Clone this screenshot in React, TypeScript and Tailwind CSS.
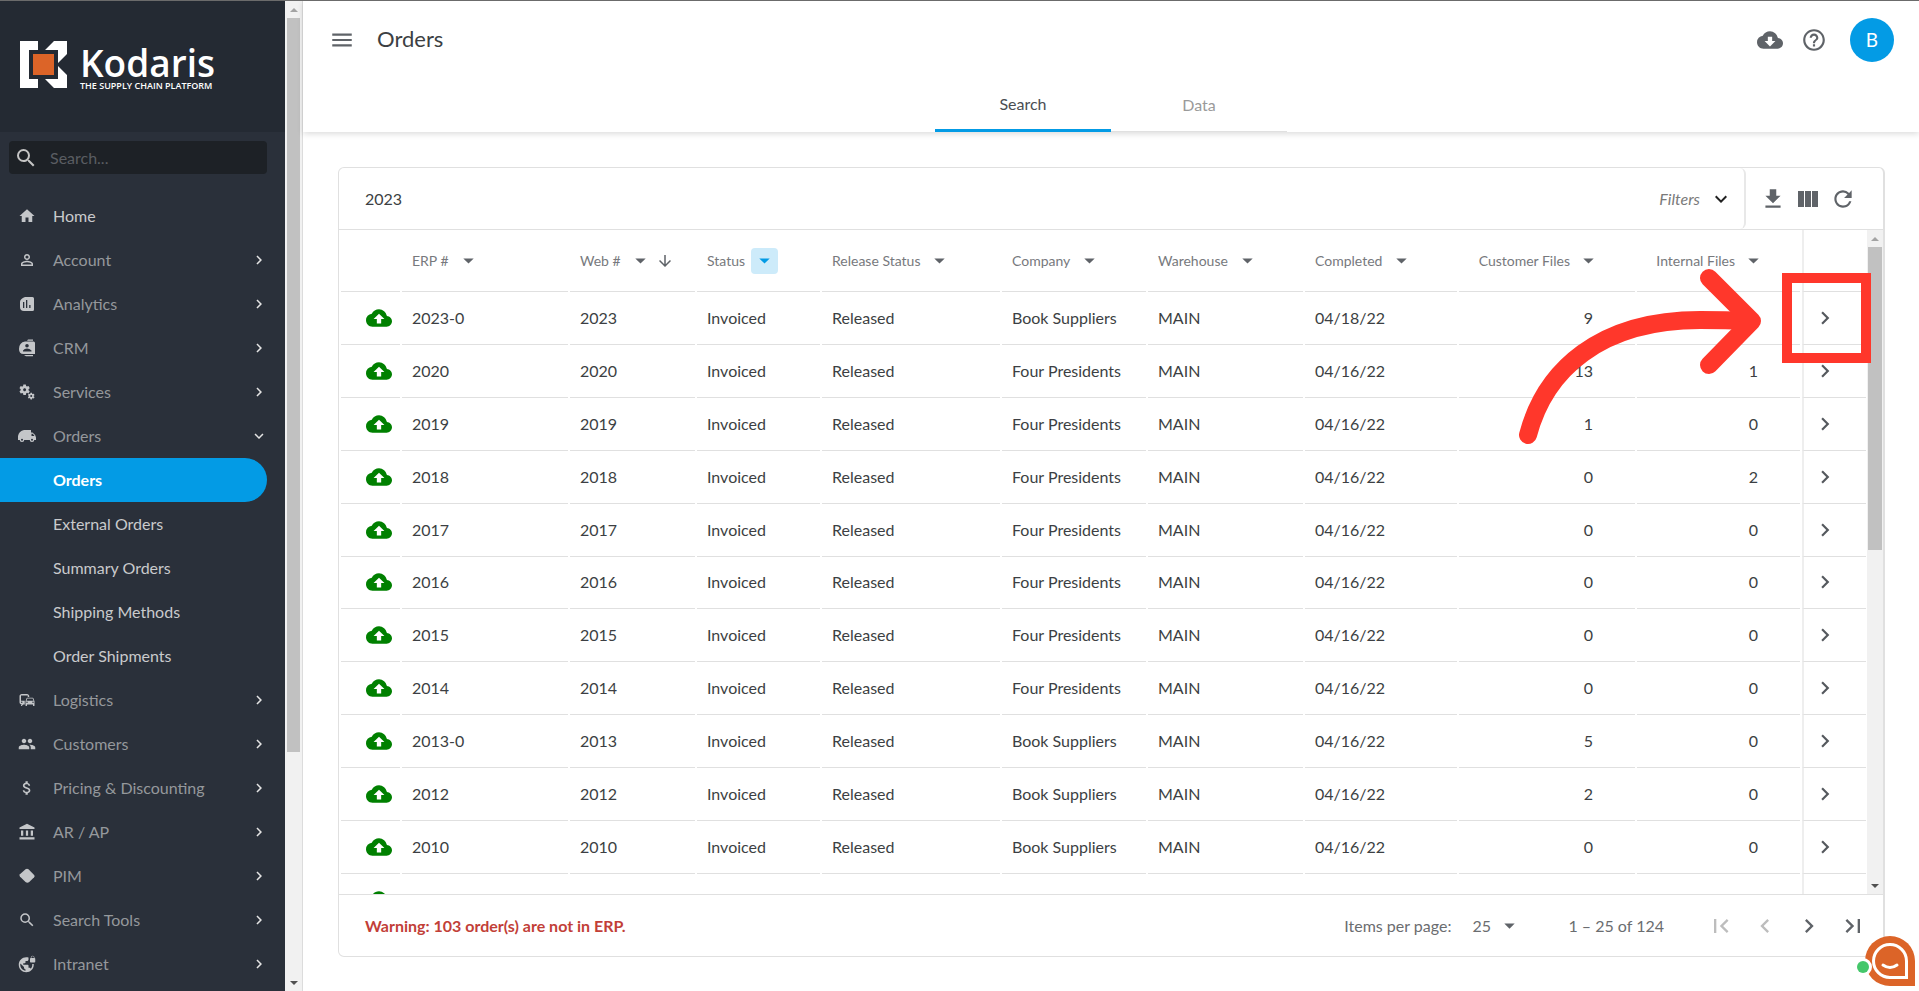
import React from 'react';
import {
  MdAccountBalance,
  MdArrowDownward,
  MdArrowDropDown,
  MdAttachMoney,
  MdBackup,
  MdChevronLeft,
  MdChevronRight,
  MdCloudDownload,
  MdCommute,
  MdExpandMore,
  MdFirstPage,
  MdGetApp,
  MdGroup,
  MdHelpOutline,
  MdHome,
  MdLastPage,
  MdMenu,
  MdMiscellaneousServices,
  MdPersonOutline,
  MdRefresh,
  MdSearch,
  MdVpnLock,
} from 'react-icons/md';
import type { IconType } from 'react-icons';

interface NavItem {
  label: string;
  icon?: IconType | typeof DiamondIcon;
  state?: 'closed' | 'open';
  child?: boolean;
  active?: boolean;
}

interface Order {
  erp: string;
  web: string;
  company: string;
  completed: string;
  customerFiles: number;
  internalFiles: number | null;
}

const navItems: NavItem[] = [
  { label: 'Home', icon: MdHome },
  { label: 'Account', icon: MdPersonOutline, state: 'closed' },
  { label: 'Analytics', icon: AnalyticsIcon, state: 'closed' },
  { label: 'CRM', icon: ContactsIcon, state: 'closed' },
  { label: 'Services', icon: MdMiscellaneousServices, state: 'closed' },
  { label: 'Orders', icon: TruckIcon, state: 'open' },
  { label: 'Orders', child: true, active: true },
  { label: 'External Orders', child: true },
  { label: 'Summary Orders', child: true },
  { label: 'Shipping Methods', child: true },
  { label: 'Order Shipments', child: true },
  { label: 'Logistics', icon: MdCommute, state: 'closed' },
  { label: 'Customers', icon: MdGroup, state: 'closed' },
  { label: 'Pricing & Discounting', icon: MdAttachMoney, state: 'closed' },
  { label: 'AR / AP', icon: MdAccountBalance, state: 'closed' },
  { label: 'PIM', icon: DiamondIcon, state: 'closed' },
  { label: 'Search Tools', icon: MdSearch, state: 'closed' },
  { label: 'Intranet', icon: MdVpnLock, state: 'closed' },
];

const orders: Order[] = [
  { erp: '2023-0', web: '2023', company: 'Book Suppliers', completed: '04/18/22', customerFiles: 9, internalFiles: null },
  { erp: '2020', web: '2020', company: 'Four Presidents', completed: '04/16/22', customerFiles: 13, internalFiles: 1 },
  { erp: '2019', web: '2019', company: 'Four Presidents', completed: '04/16/22', customerFiles: 1, internalFiles: 0 },
  { erp: '2018', web: '2018', company: 'Four Presidents', completed: '04/16/22', customerFiles: 0, internalFiles: 2 },
  { erp: '2017', web: '2017', company: 'Four Presidents', completed: '04/16/22', customerFiles: 0, internalFiles: 0 },
  { erp: '2016', web: '2016', company: 'Four Presidents', completed: '04/16/22', customerFiles: 0, internalFiles: 0 },
  { erp: '2015', web: '2015', company: 'Four Presidents', completed: '04/16/22', customerFiles: 0, internalFiles: 0 },
  { erp: '2014', web: '2014', company: 'Four Presidents', completed: '04/16/22', customerFiles: 0, internalFiles: 0 },
  { erp: '2013-0', web: '2013', company: 'Book Suppliers', completed: '04/16/22', customerFiles: 5, internalFiles: 0 },
  { erp: '2012', web: '2012', company: 'Book Suppliers', completed: '04/16/22', customerFiles: 2, internalFiles: 0 },
  { erp: '2010', web: '2010', company: 'Book Suppliers', completed: '04/16/22', customerFiles: 0, internalFiles: 0 },
];

export default function App() {
  return (
    <div className="flex h-screen overflow-hidden border-t border-[#6b6b6b] bg-white font-['Lato','Open_Sans',sans-serif] text-[16px] text-[#3c3f43]">
      <Sidebar />
      <ScrollTrack className="w-[17px] pl-[2px] pr-[2px]" thumb="h-[734px]" />
      <main className="relative flex min-w-0 flex-1 flex-col border-l border-[#dcdcdc]">
        <Header />
        <div className="flex min-h-0 flex-1 flex-col pt-[35px] pr-[34px] pb-[34px] pl-[35px]">
          <OrdersCard />
        </div>
        <Callout />
        <ChatLauncher />
      </main>
    </div>
  );
}

function Sidebar() {
  return (
    <aside className="flex w-[285px] shrink-0 flex-col overflow-hidden bg-[#2a303a]">
      <div className="flex h-[131px] shrink-0 items-center bg-[#242a33] pl-5 pb-1">
        <Logo />
      </div>
      <label className="mx-[9px] mt-[9px] mr-[18px] flex h-[33px] shrink-0 items-center rounded bg-[#1d2126] pl-[5px]">
        <MdSearch className="h-6 w-6 shrink-0 text-[#c4c4c4]" />
        <input
          type="text"
          aria-label="Search menu"
          placeholder="Search..."
          className="ml-[12px] w-full bg-transparent text-[16px] text-white outline-none placeholder:text-[#5a5d62]"
        />
      </label>
      <nav className="mt-5 pr-[18px]">
        {navItems.map((item, index) => (
          <NavRow key={index} item={item} />
        ))}
      </nav>
    </aside>
  );
}

function NavRow({ item }: { item: NavItem }) {
  const Icon = item.icon;
  const bright = item.child || !item.state;
  let color = bright ? 'text-[#c9cacc]' : 'text-[#95989c]';
  if (item.active) color = 'rounded-r-full bg-[#039be5] font-bold text-white';

  return (
    <a href="#" className={`flex h-11 items-center ${color}`}>
      <span className="flex w-[53px] justify-center text-[#c4c6c9]">{Icon && <Icon className="h-[18px] w-[18px]" />}</span>
      <span className="flex-1">{item.label}</span>
      {item.state === 'closed' && <MdChevronRight className="-mr-px h-[18px] w-[18px] text-[#e4e4e4]" />}
      {item.state === 'open' && <MdExpandMore className="-mr-px h-[18px] w-[18px] text-[#e4e4e4]" />}
    </a>
  );
}

function Header() {
  return (
    <header className="relative flex h-[131px] shrink-0 flex-col shadow-[0_2px_6px_rgba(0,0,0,0.14)]">
      <div className="flex items-center pt-[17px] pr-[25px] pl-[26px]">
        <button type="button" aria-label="Toggle menu">
          <MdMenu className="h-[26px] w-[26px] text-[#5f6368]" />
        </button>
        <h1 className="ml-[22px] flex-1 pb-[3px] text-[22px] text-[#3c3f43]">Orders</h1>
        <div className="flex items-center gap-[18px] text-[#5f6368]">
          <button type="button" aria-label="Downloads">
            <MdCloudDownload className="h-[26px] w-[26px]" />
          </button>
          <button type="button" aria-label="Help">
            <MdHelpOutline className="h-[26px] w-[26px]" />
          </button>
          <button type="button" className="ml-[5px] h-11 w-11 rounded-full bg-[#039be5] text-[19px] text-white">
            B
          </button>
        </div>
      </div>
      <div className="mt-auto flex justify-center" role="tablist">
        <button type="button" role="tab" aria-selected="true" className="h-[53px] w-44 border-b-[3px] border-[#039be5] text-[#4a4d52]">
          Search
        </button>
        <button type="button" role="tab" aria-selected="false" className="h-[53px] w-44 border-b border-[#e0e0e0] text-[#9a9a9a]">
          Data
        </button>
      </div>
    </header>
  );
}

function OrdersCard() {
  return (
    <section className="flex min-h-0 flex-1 flex-col overflow-hidden rounded-md border border-r-2 border-[#e0e0e0]">
      <div className="flex h-[62px] shrink-0 border-b border-[#e0e0e0]">
        <input
          type="text"
          aria-label="Search orders"
          defaultValue="2023"
          className="min-w-0 flex-1 bg-transparent pl-[26px] outline-none"
        />
        <button type="button" className="flex items-center rounded-r-md border-r-2 border-[#e8e8e8] pr-[11px] text-[#7a7a7a] italic">
          Filters
          <MdExpandMore className="ml-[9px] h-[24px] w-[24px] text-[#222]" />
        </button>
        <div className="flex items-center gap-[9px] pr-[27px] pl-[14px] text-[#5f6368]">
          <button type="button" aria-label="Download">
            <MdGetApp className="h-[26px] w-[26px]" />
          </button>
          <button type="button" aria-label="Columns">
            <ColumnsIcon />
          </button>
          <button type="button" aria-label="Refresh">
            <MdRefresh className="h-[26px] w-[26px]" />
          </button>
        </div>
      </div>
      <div className="flex min-h-0 flex-1">
        <div className="min-w-0 flex-1 overflow-hidden">
          <OrdersTable />
        </div>
        <ScrollTrack className="w-4 px-[1px]" thumb="h-[303px]" />
      </div>
      <Pagination />
    </section>
  );
}

function OrdersTable() {
  const text = 'border-b border-[#e0e0e0] pl-[10px] text-left whitespace-nowrap';
  const number = 'border-b border-[#e0e0e0] pr-[42px] text-right';
  const action = 'border-b border-l-2 border-b-[#e0e0e0] border-l-[#eeeeee] pl-[8px]';

  return (
    <table className="h-[697px] w-full table-fixed border-separate border-spacing-x-[2px] border-spacing-y-0">
      <colgroup>
        <col className="w-[59px]" />
        <col className="w-[166px]" />
        <col className="w-[125px]" />
        <col className="w-[123px]" />
        <col className="w-[178px]" />
        <col className="w-[144px]" />
        <col className="w-[155px]" />
        <col className="w-[152px]" />
        <col className="w-[176px]" />
        <col className="w-[163px]" />
        <col className="w-[64px]" />
      </colgroup>
      <thead>
        <tr className="h-[62px]">
          <th className="border-b border-[#e0e0e0]" />
          <HeaderCell label="ERP #" />
          <HeaderCell label="Web #" sorted />
          <HeaderCell label="Status" filtered />
          <HeaderCell label="Release Status" />
          <HeaderCell label="Company" />
          <HeaderCell label="Warehouse" />
          <HeaderCell label="Completed" />
          <HeaderCell label="Customer Files" numeric />
          <HeaderCell label="Internal Files" numeric />
          <th className={action} />
        </tr>
      </thead>
      <tbody>
        {orders.map((order) => (
          <tr key={order.erp}>
            <td className="border-b border-[#e0e0e0] pl-[25px]">
              <MdBackup className="h-[26px] w-[26px] text-[#008000]" />
            </td>
            <td className={text}>{order.erp}</td>
            <td className={text}>{order.web}</td>
            <td className={text}>Invoiced</td>
            <td className={text}>Released</td>
            <td className={text}>{order.company}</td>
            <td className={text}>MAIN</td>
            <td className={text}>{order.completed}</td>
            <td className={number}>{order.customerFiles}</td>
            <td className={number}>{order.internalFiles}</td>
            <td className={action}>
              <button type="button" aria-label={`Open order ${order.web}`} className="block">
                <MdChevronRight className="h-[26px] w-[26px] text-[#55595e]" />
              </button>
            </td>
          </tr>
        ))}
        {/* next row, only its icon reaches into view */}
        <tr>
          <td className="border-b border-[#e0e0e0] pl-[25px]">
            <MdBackup className="h-[26px] w-[26px] text-[#008000]" />
          </td>
          <td colSpan={9} />
          <td className={action} />
        </tr>
      </tbody>
    </table>
  );
}

function HeaderCell({ label, sorted, filtered, numeric }: { label: string; sorted?: boolean; filtered?: boolean; numeric?: boolean }) {
  return (
    <th className={`border-b border-[#e0e0e0] text-[14px] font-normal text-[#77797d] ${numeric ? 'pr-[33px]' : 'pl-[10px]'}`}>
      <div className={`flex items-center whitespace-nowrap ${numeric ? 'justify-end gap-[5px]' : 'gap-[6px]'}`}>
        {label}
        <button
          type="button"
          aria-label={`Filter ${label}`}
          className={`flex h-[26px] w-[27px] items-center justify-center rounded ${filtered ? 'bg-[#cdebfa] text-[#039be5]' : 'text-[#5f6368]'}`}
        >
          <MdArrowDropDown className="h-[25px] w-[25px]" />
        </button>
        {sorted && <MdArrowDownward className="-ml-1 h-[18px] w-[18px] text-[#5f6368]" />}
      </div>
    </th>
  );
}

function Pagination() {
  return (
    <footer className="flex h-[62px] shrink-0 items-center border-t border-[#e0e0e0] pr-4 pl-[26px] text-[#6b6d70]">
      <p className="flex-1 font-bold text-[#c23f38]">Warning: 103 order(s) are not in ERP.</p>
      <label htmlFor="page-size">Items per page:</label>
      <span className="relative ml-[21px] flex items-center">
        <select id="page-size" defaultValue="25" className="w-[50px] appearance-none bg-transparent outline-none">
          <option value="25">25</option>
          <option value="50">50</option>
        </select>
        <MdArrowDropDown className="pointer-events-none absolute right-0 h-[25px] w-[25px] text-[#5f6368]" />
      </span>
      <span className="ml-[46px]">1 – 25 of 124</span>
      <div className="ml-[43px] flex gap-[16px] text-[#5f6368]">
        <button type="button" aria-label="First page" disabled className="text-[#bdbdbd]">
          <MdFirstPage className="h-[28px] w-[28px]" />
        </button>
        <button type="button" aria-label="Previous page" disabled className="text-[#bdbdbd]">
          <MdChevronLeft className="h-[28px] w-[28px]" />
        </button>
        <button type="button" aria-label="Next page">
          <MdChevronRight className="h-[28px] w-[28px]" />
        </button>
        <button type="button" aria-label="Last page">
          <MdLastPage className="h-[28px] w-[28px]" />
        </button>
      </div>
    </footer>
  );
}

function ScrollTrack({ className, thumb }: { className: string; thumb: string }) {
  return (
    <div className={`flex shrink-0 flex-col bg-[#f1f1f1] ${className}`}>
      <span className="flex h-[17px] shrink-0 items-center justify-center">
        <svg width="8" height="4" viewBox="0 0 8 4" fill="#a3a3a3">
          <path d="M0 4 4 0l4 4z" />
        </svg>
      </span>
      <span className={`shrink-0 bg-[#c1c1c1] ${thumb}`} />
      <span className="mt-auto flex h-[17px] items-center justify-center">
        <svg width="8" height="4" viewBox="0 0 8 4" fill="#505050">
          <path d="M0 0h8L4 4z" />
        </svg>
      </span>
    </div>
  );
}

function Logo() {
  return (
    <div className="flex items-center gap-[13px] text-white">
      <svg width="47" height="47" viewBox="0 0 47 47" fill="#fff">
        <path d="M0 0h18v9H9v29h9v9H0z" />
        <path d="M34 0h13v13L38 22V9H25z" />
        <path d="M38 25l9 9v13H34l-9-9h13z" />
        <path d="M13 13h21v21H13z" fill="#dc6428" />
      </svg>
      <div className="flex flex-col pt-1 font-['Open_Sans','Noto_Sans',sans-serif]">
        <span className="text-[37px] leading-[38px] font-semibold">Kodaris</span>
        <span className="text-[9px] leading-[8px] font-semibold whitespace-nowrap">THE SUPPLY CHAIN PLATFORM</span>
      </div>
    </div>
  );
}

function AnalyticsIcon({ className }: { className?: string }) {
  return (
    <svg viewBox="0 0 18 18" fill="currentColor" className={className}>
      <path
        fillRule="evenodd"
        d="M7 2h7.500q1.500 0 1.500 1.500v11q0 1.500-1.500 1.500H6q-4 0-4-4V7q0-3 5-5zM5 7v6h1.300V7zM8 5v8h1.300V5zM11.200 10v3h1.300v-3z"
      />
    </svg>
  );
}

function ContactsIcon({ className }: { className?: string }) {
  return (
    <svg viewBox="0 0 18 18" fill="currentColor" className={className}>
      <path d="M10 .5h5v1.200H9zM6 16h9v1.300H8z" />
      <path
        fillRule="evenodd"
        d="M7 2.500h8.500q1.500 0 1.500 1.500v11H5.500Q1 15 1 10q0-6.500 6-7.500zM9 5a1.800 1.800 0 1 0 0 3.600A1.800 1.800 0 0 0 9 5zM5 12.500h8.500v-1Q11.500 9.500 9 9.500t-4 2z"
      />
    </svg>
  );
}

function TruckIcon({ className }: { className?: string }) {
  return (
    <svg viewBox="0 0 18 18" fill="currentColor" className={className}>
      <path fillRule="evenodd" d="M6 3h7v2.500h1.500q3.500 2.500 3.500 5V13H0V9q1-5 6-6zM13.500 6.700V9h3q-.8-1.500-2-2.300z" />
      <path d="M4 10.500a2.300 2.300 0 1 1 0 4.600 2.300 2.300 0 0 1 0-4.600zM14 10.500a2.300 2.300 0 1 1 0 4.600 2.300 2.300 0 0 1 0-4.600z" />
      <circle cx="4" cy="12.800" r="1" fill="#2a303a" />
      <circle cx="14" cy="12.800" r="1" fill="#2a303a" />
    </svg>
  );
}

function DiamondIcon({ className }: { className?: string }) {
  return (
    <svg viewBox="0 0 24 24" fill="currentColor" className={className}>
      <path d="M10 3q2-1.500 4 0l7.500 7.500q1.500 1.500 0 3l-6.500 6.500q-2.500 2-5 0L2.500 12.500q-1-1.500 0-3z" />
    </svg>
  );
}

function ColumnsIcon() {
  return (
    <svg width="26" height="26" viewBox="0 0 26 26" fill="currentColor">
      <path d="M3 5h6v16H3zM10 5h6v16h-6zM17 5h6v16h-6z" />
    </svg>
  );
}

// Red highlight and arrow drawn over the first row's open button
function Callout() {
  return (
    <svg
      className="pointer-events-none absolute top-[261px] right-[42px]"
      width="367"
      height="190"
      viewBox="0 0 367 190"
      fill="none"
      stroke="#ff372b"
    >
      <path d="M277 16h79v80h-79z" strokeWidth="10" />
      <path d="M18 173C35 108 90 58 190 58q26 0 50 1" strokeWidth="18" strokeLinecap="round" />
      <path d="M199 16l43 43-43 44" strokeWidth="18" strokeLinecap="round" strokeLinejoin="round" />
    </svg>
  );
}

function ChatLauncher() {
  return (
    <button type="button" aria-label="Open chat" className="absolute right-[2px] bottom-1">
      <svg width="60" height="52" viewBox="0 0 60 52" fill="none">
        <path d="M33 1a25 25 0 0 1 25 25v25H33a25 25 0 0 1 0-50z" fill="#dc6428" />
        <circle cx="6" cy="32" r="9" fill="#fff" />
        <path d="M33 9.500a16.500 16.500 0 0 1 16.500 16.500v16.500H33a16.500 16.500 0 0 1 0-33z" fill="#dc6428" stroke="#fff" strokeWidth="3" />
        <path d="M26 30q7 5 14 0" stroke="#fff" strokeWidth="3" strokeLinecap="round" />
        <circle cx="6" cy="32" r="6" fill="#44c76a" />
      </svg>
    </button>
  );
}
